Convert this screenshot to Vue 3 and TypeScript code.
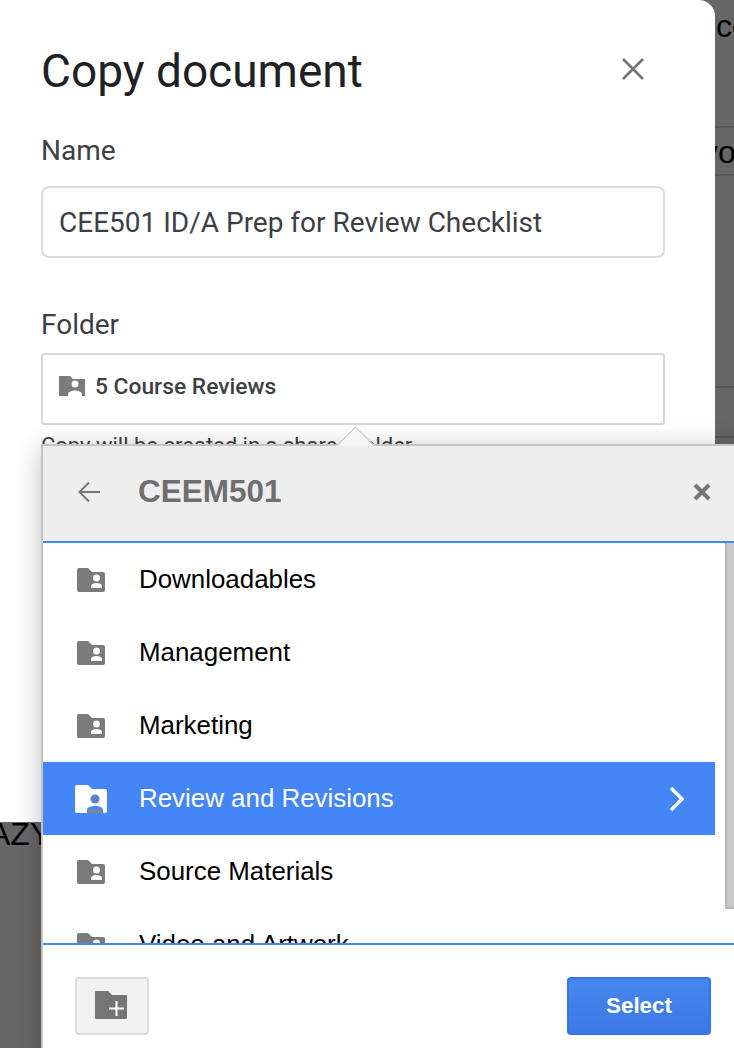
<script setup lang="ts">
const folders = ['Downloadables', 'Management', 'Marketing', 'Review and Revisions', 'Source Materials', 'Video and Artwork']
const selected = 'Review and Revisions'
const folderPath = 'M2 0h9l4 4h11a2 2 0 0 1 2 2v16a2 2 0 0 1-2 2H2a2 2 0 0 1-2-2V2a2 2 0 0 1 2-2z'
</script>

<template>
  <div class="page">
    <div class="left">
      <div class="dialog">
        <div class="dialog-head">
          <h1 class="title">Copy document</h1>
          <svg class="close" viewBox="0 0 24 24" width="24" height="24">
            <path d="M2 2l20 20M22 2L2 22" stroke="#757575" stroke-width="2.6" fill="none" />
          </svg>
        </div>
        <label class="label">Name</label>
        <div class="name-field">CEE501 ID/A Prep for Review Checklist</div>
        <label class="label folder-label">Folder</label>
        <div class="folder-field">
          <svg viewBox="0 0 26 20" width="26" height="20">
            <path d="M0 0h11l3 3h12v17H0z" fill="#7b7b7b" />
            <circle cx="16" cy="8" r="3.500" fill="#fff" />
            <path d="M9 20v-2c0-2 4-3.500 7-3.500s7 1.500 7 3.500v2z" fill="#fff" />
          </svg>
          <span>5 Course Reviews</span>
        </div>
        <p class="hint">Copy will be created in a shared folder</p>
      </div>
      <div class="behind-left"><span>AZY</span></div>
    </div>
    <div class="behind-right">
      <div class="strip strip-a">co</div>
      <div class="strip strip-b"><span>vo</span></div>
      <div class="strip strip-c"></div>
      <div class="strip strip-d"></div>
    </div>

    <div class="picker">
      <div class="tail"></div>
      <div class="picker-head">
        <svg class="back" viewBox="0 0 24 24" width="24" height="24">
          <path d="M23 12H3M12 2.500L2.500 12l9.500 9.500" stroke="#757575" stroke-width="2" fill="none" />
        </svg>
        <span class="picker-title">CEEM501</span>
        <svg class="picker-close" viewBox="0 0 18 18" width="18" height="18">
          <path d="M2 2l14 14M16 2L2 16" stroke="#757575" stroke-width="4" fill="none" />
        </svg>
      </div>
      <div class="list">
        <div v-for="f in folders" :key="f" class="row" :class="{ active: f === selected }">
          <span class="row-icon">
            <svg v-if="f === selected" viewBox="0 0 32 28" width="32" height="28">
              <path d="M2 0h11l4 4h13a2 2 0 0 1 2 2v20a2 2 0 0 1-2 2H2a2 2 0 0 1-2-2V2a2 2 0 0 1 2-2z" fill="#fff" />
              <circle cx="20" cy="14" r="4.500" fill="#5b82c9" />
              <path d="M12 28v-3c0-3 4-4 8-4s8 1 8 4v3z" fill="#4486f6" />
              <rect x="12" y="24.500" width="16" height="3.500" fill="#7d8794" />
            </svg>
            <svg v-else viewBox="0 0 28 24" width="28" height="24">
              <path :d="folderPath" fill="#7b7b7b" />
              <circle cx="19.500" cy="10" r="3.500" fill="#fff" />
              <path d="M14 20v-2c0-2 3-3 5.500-3s5.500 1 5.500 3v2z" fill="#fff" />
            </svg>
          </span>
          <span class="row-name">{{ f }}</span>
          <svg v-if="f === selected" class="chevron" viewBox="0 0 18 26" width="18" height="26">
            <path d="M3 2l11 11L3 24" stroke="#fff" stroke-width="3.400" fill="none" />
          </svg>
        </div>
        <div class="scrollbar"></div>
      </div>
      <div class="picker-foot">
        <button class="btn-new">
          <svg viewBox="0 0 32 28" width="32" height="28">
            <path d="M1 0h12l4 4h14a1 1 0 0 1 1 1v22a1 1 0 0 1-1 1H1a1 1 0 0 1-1-1V1a1 1 0 0 1 1-1z" fill="#757575" />
            <path d="M14 17.500h15M21.500 10v15" stroke="#fff" stroke-width="2" fill="none" />
          </svg>
        </button>
        <button class="btn-select">Select</button>
      </div>
    </div>
  </div>
</template>

<style>
html,
body {
  margin: 0;
  background: #666;
}
</style>

<style scoped>
.page {
  position: relative;
  display: flex;
  width: 734px;
  height: 1048px;
  overflow: hidden;
  background: #666;
  font-family: Roboto, "Liberation Sans", sans-serif;
}

.left {
  width: 715px;
  flex-shrink: 0;
}

.dialog {
  box-sizing: border-box;
  height: 822px;
  padding: 0 50px 0 41px;
  background: #fff;
  border-top-right-radius: 16px;
  overflow: hidden;
  color: #3c4043;
}

.dialog-head {
  display: flex;
  align-items: center;
  justify-content: space-between;
  height: 134px;
  padding-right: 20px;
}

.title {
  margin: 8px 0 0;
  font-size: 46px;
  font-weight: 400;
  color: #202124;
}

.close {
  width: 24px;
  height: 24px;
  margin-top: 4px;
}

.label {
  display: block;
  font-size: 28px;
  line-height: 34px;
}

.name-field {
  box-sizing: border-box;
  height: 72px;
  margin-top: 18px;
  padding-left: 16px;
  border: 2px solid #dadce0;
  border-radius: 8px;
  font-size: 28px;
  line-height: 70px;
}

.folder-label {
  margin-top: 50px;
}

.folder-field {
  box-sizing: border-box;
  display: flex;
  align-items: center;
  gap: 10px;
  height: 72px;
  margin-top: 11px;
  padding: 0 0 6px 16px;
  border: 2px solid #d6d6d6;
  border-radius: 3px;
  font-size: 22.800px;
  font-weight: 500;
}

.hint {
  margin: 9px 0 0;
  font-size: 22px;
  line-height: 24px;
  white-space: nowrap;
}

.behind-left {
  width: 41px;
  overflow: hidden;
  font-family: "Liberation Sans", sans-serif;
  font-size: 32px;
  line-height: 24px;
  color: #000;
  white-space: nowrap;
}

.behind-left span {
  display: block;
  margin-left: -11px;
}

.behind-right {
  flex: 1;
  display: flex;
  flex-direction: column;
  font-family: "Liberation Sans", sans-serif;
  font-size: 32px;
  color: #000;
  overflow: hidden;
}

.strip {
  box-sizing: border-box;
  border-bottom: 2px solid #555;
}

.strip-a {
  height: 128px;
  padding: 8px 0 0 1px;
}

.strip-b {
  height: 48px;
  line-height: 48px;
  white-space: nowrap;
}

.strip-b span {
  display: block;
  margin-left: -13px;
}

.strip-c {
  height: 212px;
}

.strip-d {
  height: 50px;
}

.picker {
  position: absolute;
  left: 41px;
  top: 444px;
  width: 700px;
  height: 620px;
  display: flex;
  flex-direction: column;
  background: #fff;
  border-top: 2px solid #c4c4c4;
  border-left: 2px solid #c4c4c4;
  box-shadow: 0 4px 24px rgba(0, 0, 0, 0.25);
  font-family: "Liberation Sans", sans-serif;
}

.tail {
  position: absolute;
  left: 299px;
  top: -14px;
  width: 26px;
  height: 26px;
  background: #f6f6f6;
  border-top: 1px solid #c4c4c4;
  border-left: 1px solid #c4c4c4;
  transform: rotate(45deg);
}

.picker-head {
  position: relative;
  display: flex;
  align-items: center;
  height: 91px;
  flex-shrink: 0;
  padding: 0 0 4px 34px;
  background: #eee;
  border-bottom: 2px solid #4486f6;
}

.picker-title {
  margin-left: 37px;
  font-size: 31.500px;
  font-weight: 700;
  color: #6f6f6f;
}

.picker-close {
  position: absolute;
  left: 650px;
  top: 37px;
}

.list {
  position: relative;
  height: 400px;
  flex-shrink: 0;
  padding-right: 19px;
  overflow: hidden;
  border-bottom: 2px solid #4486f6;
}

.row {
  display: flex;
  align-items: center;
  height: 73px;
  width: 672px;
  color: #000;
  font-size: 25.900px;
}

.row.active {
  background: #4486f6;
  color: #fff;
}

.row-icon {
  display: flex;
  justify-content: center;
  width: 32px;
  margin-left: 32px;
  margin-right: 32px;
}

.row-name {
  flex: 1;
}

.chevron {
  margin-right: 29px;
}

.scrollbar {
  position: absolute;
  left: 682px;
  top: 0;
  width: 18px;
  height: 364px;
  background: #c9c9c9;
  border-left: 2px solid #b5b5b5;
  border-bottom: 2px solid #b5b5b5;
}

.picker-foot {
  display: flex;
  justify-content: space-between;
  padding: 32px 0 0 32px;
  width: 636px;
}

.btn-new {
  display: flex;
  align-items: center;
  justify-content: center;
  width: 74px;
  height: 58px;
  padding: 0 2px 2px 0;
  background: #f1f1f1;
  border: 2px solid #dcdcdc;
  border-radius: 4px;
}

.btn-select {
  width: 144px;
  height: 58px;
  padding: 0;
  background: linear-gradient(#4787ed, #3b78e7);
  border: 2px solid #3079ed;
  border-radius: 4px;
  color: #fff;
  font-family: "Liberation Sans", sans-serif;
  font-size: 22.400px;
  font-weight: 700;
}
</style>
